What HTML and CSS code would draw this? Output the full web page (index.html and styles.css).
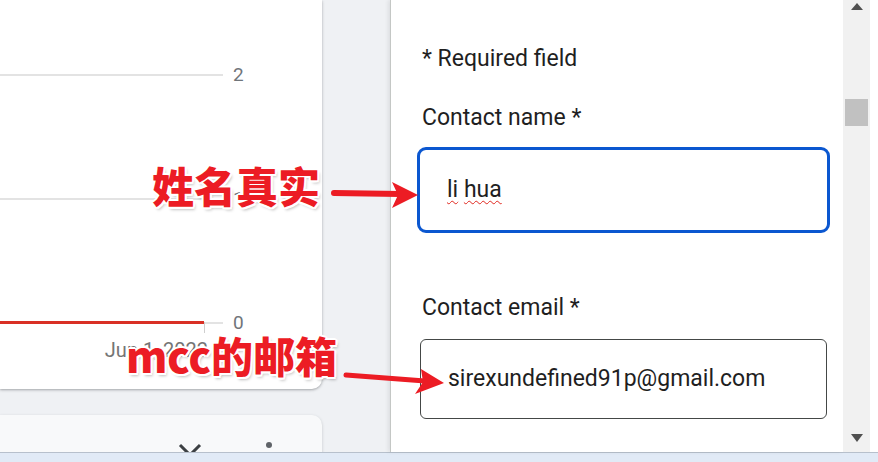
FILE: index.html
```html
<!DOCTYPE html>
<html>
<head>
<meta charset="utf-8">
<link rel="stylesheet" href="styles.css">
</head>
<body>
<div class="screen">
  <div class="workspace">
    <div class="left">
      <div class="card chart-card">
        <div class="chart">
          <div class="grid-row"><div class="grid-line"></div><span class="axis-label">2</span></div>
          <div class="grid-row"><div class="grid-line"></div><span class="axis-label">1</span></div>
          <div class="grid-row"><div class="grid-line"><div class="series"></div><div class="tick"></div></div><span class="axis-label">0</span></div>
          <div class="date-row">Jun 1, 2022</div>
        </div>
      </div>
      <div class="card sub-card">
        <svg class="icon-x" width="26" height="26" viewBox="0 0 26 26"><path d="M3 3 L23 23 M23 3 L3 23" stroke="#3c4043" stroke-width="3" fill="none"/></svg>
        <span class="more-dot"></span>
      </div>
    </div>
    <div class="panel">
      <p class="req">* Required field</p>
      <div class="field-label">Contact name *</div>
      <div class="input focused"><span class="spell">li</span>&nbsp;<span class="spell">hua</span></div>
      <div class="field-label email-label">Contact email *</div>
      <div class="input normal">sirexundefined91p@gmail.com</div>
    </div>
    <div class="scrollbar">
      <span class="arrow up"></span>
      <span class="thumb"></span>
      <span class="spacer"></span>
      <span class="arrow down"></span>
    </div>
    <div class="edge"></div>
  </div>
  <div class="taskbar"></div>
  <div class="annot a1">姓名真实</div>
  <div class="annot a2">mcc的邮箱</div>
  <svg class="arrows" width="878" height="462" viewBox="0 0 878 462">
    <line x1="334" y1="193" x2="400" y2="194" stroke="#ec1c24" stroke-width="6" stroke-linecap="round"/>
    <polygon points="392,182 418,195 392,208 398,195" fill="#ec1c24"/>
    <line x1="346" y1="375" x2="425" y2="381" stroke="#ec1c24" stroke-width="5" stroke-linecap="round"/>
    <polygon points="421,369 444,383 415,394 423,382" fill="#ec1c24"/>
  </svg>
</div>
</body>
</html>
```
FILE: styles.css
```css
* { box-sizing: border-box; }
html, body { margin: 0; padding: 0; }
body { font-family: Roboto, "Noto Sans", sans-serif; background: #fff; }

.screen { position: relative; width: 878px; height: 462px; overflow: hidden; }
.workspace { display: flex; height: 452px; }

.left {
  width: 390px; flex: none; background: #eff1f4;
  display: flex; flex-direction: column; gap: 26px; overflow: hidden;
}
.chart-card {
  width: 322px; height: 389px; flex: none; background: #fff;
  border-radius: 0 0 10px 0;
  box-shadow: 0 1px 3px rgba(60,64,67,.3), 0 1px 2px rgba(60,64,67,.15);
}
.chart { display: flex; flex-direction: column; padding-top: 63px; }
.grid-row { display: flex; align-items: center; height: 24px; }
.grid-row + .grid-row { margin-top: 100px; }
.grid-line { width: 223px; height: 2px; background: #e3e3e3; position: relative; }
.series { position: absolute; left: 0; top: -1px; width: 204px; height: 3px; background: #d93025; }
.tick { position: absolute; left: 204px; top: 0; width: 1px; height: 11px; background: #cfcfcf; }
.axis-label { margin-left: 10px; font-size: 19px; line-height: 24px; color: #70757a; }
.date-row { width: 208px; text-align: right; margin-top: 5px; font-size: 20px; line-height: 20px; color: #757575; }

.sub-card {
  width: 322px; flex: 1; background: #f8f9fa;
  border-radius: 0 10px 0 0;
  box-shadow: 0 1px 3px rgba(60,64,67,.25);
  display: flex; align-items: flex-start;
}
.icon-x { margin-left: 177px; margin-top: 27px; flex: none; }
.more-dot { width: 6px; height: 6px; border-radius: 50%; background: #5f6368; margin-left: 63px; margin-top: 27px; flex: none; }

.panel {
  width: 453px; flex: none; background: #fff;
  border-left: 1px solid #c4c7c5;
  box-shadow: -2px 0 4px rgba(0,0,0,.08);
  padding: 45px 0 0 31px;
  display: flex; flex-direction: column; align-items: flex-start;
  color: #1f1f1f;
}
.req { margin: 0; font-size: 23px; line-height: 28px; }
.field-label { font-size: 23px; line-height: 28px; margin-top: 31px; }
.email-label { margin-top: 61px; }
.input { display: flex; align-items: center; font-size: 23px; line-height: 28px; }
.focused {
  margin-top: 15px; margin-left: -5px; width: 413px; height: 86px;
  border: 3px solid #0b57d0; border-radius: 9px; padding-left: 27px;
}
.normal {
  margin-top: 17px; margin-left: -2px; width: 407px; height: 80px;
  border: 1px solid #444746; border-radius: 6px; padding-left: 27px;
}
.spell { text-decoration: underline wavy #e0281f; text-decoration-thickness: 1px; text-underline-offset: 3px; }

.scrollbar { width: 27px; flex: none; background: #f1f1f1; display: flex; flex-direction: column; align-items: center; }
.arrow { width: 0; height: 0; border-left: 6.5px solid transparent; border-right: 6.5px solid transparent; }
.arrow.up { border-bottom: 7px solid #505050; margin-top: 3px; }
.arrow.down { border-top: 8px solid #505050; margin-bottom: 10px; }
.thumb { width: 23px; height: 27px; background: #c1c1c1; margin-top: 89px; }
.spacer { flex: 1; }
.edge { width: 8px; flex: none; background: #fff; }

.taskbar { height: 10px; background: #e1eaf6; border-top: 1px solid #b7c0cc; }

.annot {
  position: absolute;
  font-family: "Noto Sans CJK SC", sans-serif; font-weight: 900;
  font-size: 42px; line-height: 42px; color: #ec1c24; white-space: nowrap;
  text-shadow: 2px 0 0 #fff, -2px 0 0 #fff, 0 2px 0 #fff, 0 -2px 0 #fff,
    1.5px 1.5px 0 #fff, -1.5px 1.5px 0 #fff, 1.5px -1.5px 0 #fff, -1.5px -1.5px 0 #fff,
    2px 3px 3px rgba(0,0,0,.25);
}
.a1 { left: 152px; top: 164px; }
.a2 { left: 126px; top: 334px; }
.arrows { position: absolute; left: 0; top: 0; pointer-events: none; }
```
